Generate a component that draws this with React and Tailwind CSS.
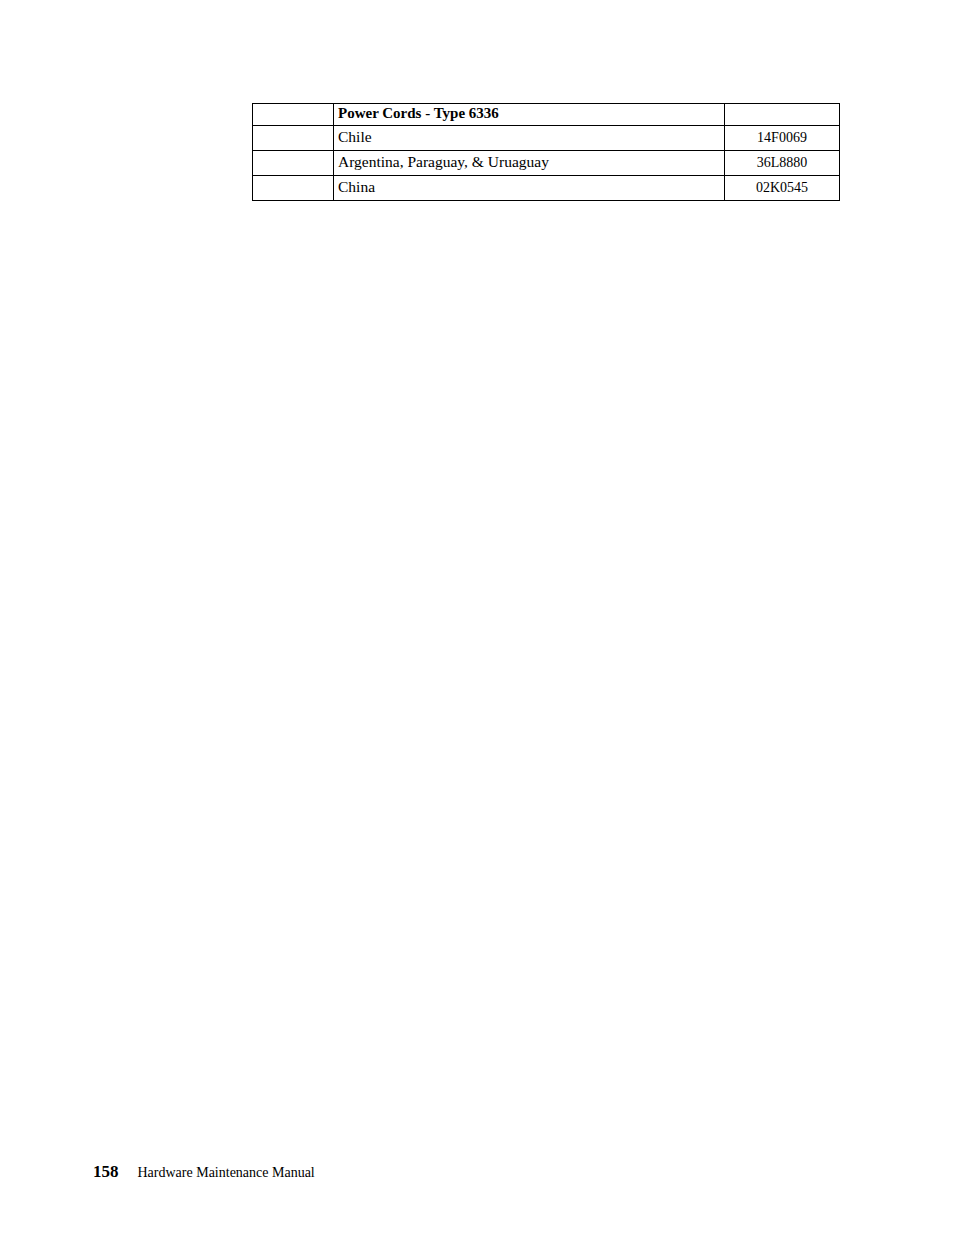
import React from "react";

const rows = [
  { name: "Chile", part: "14F0069" },
  { name: "Argentina, Paraguay, & Uruaguay", part: "36L8880" },
  { name: "China", part: "02K0545" },
];

const App = () => {
  return (
    <div className="min-h-[1235px] w-[954px] flex flex-col bg-white text-black font-['Liberation_Serif',serif]">
      <div className="pt-[103px] pl-[252px]">
        <table className="border-collapse text-[15.5px] leading-none">
          <tbody>
            <tr className="h-[22px]">
              <td className="w-[81px] border border-black"></td>
              <td className="w-[391px] border border-black px-[4px] pb-[2px] text-[15px] font-bold">
                Power Cords - Type 6336
              </td>
              <td className="w-[115px] border border-black"></td>
            </tr>
            {rows.map((r, i) => (
              <tr key={i} className="h-[25px]">
                <td className="border border-black"></td>
                <td className="border border-black px-[4px] pb-[3px]">{r.name}</td>
                <td className="border border-black text-center text-[14px] pb-[1px]">{r.part}</td>
              </tr>
            ))}
          </tbody>
        </table>
      </div>
      <div className="mt-auto pb-[51px] pl-[93px] flex items-baseline gap-[19px]">
        <span className="text-[17px] font-bold">158</span>
        <span className="text-[14px]">Hardware Maintenance Manual</span>
      </div>
    </div>
  );
};

export default App;
